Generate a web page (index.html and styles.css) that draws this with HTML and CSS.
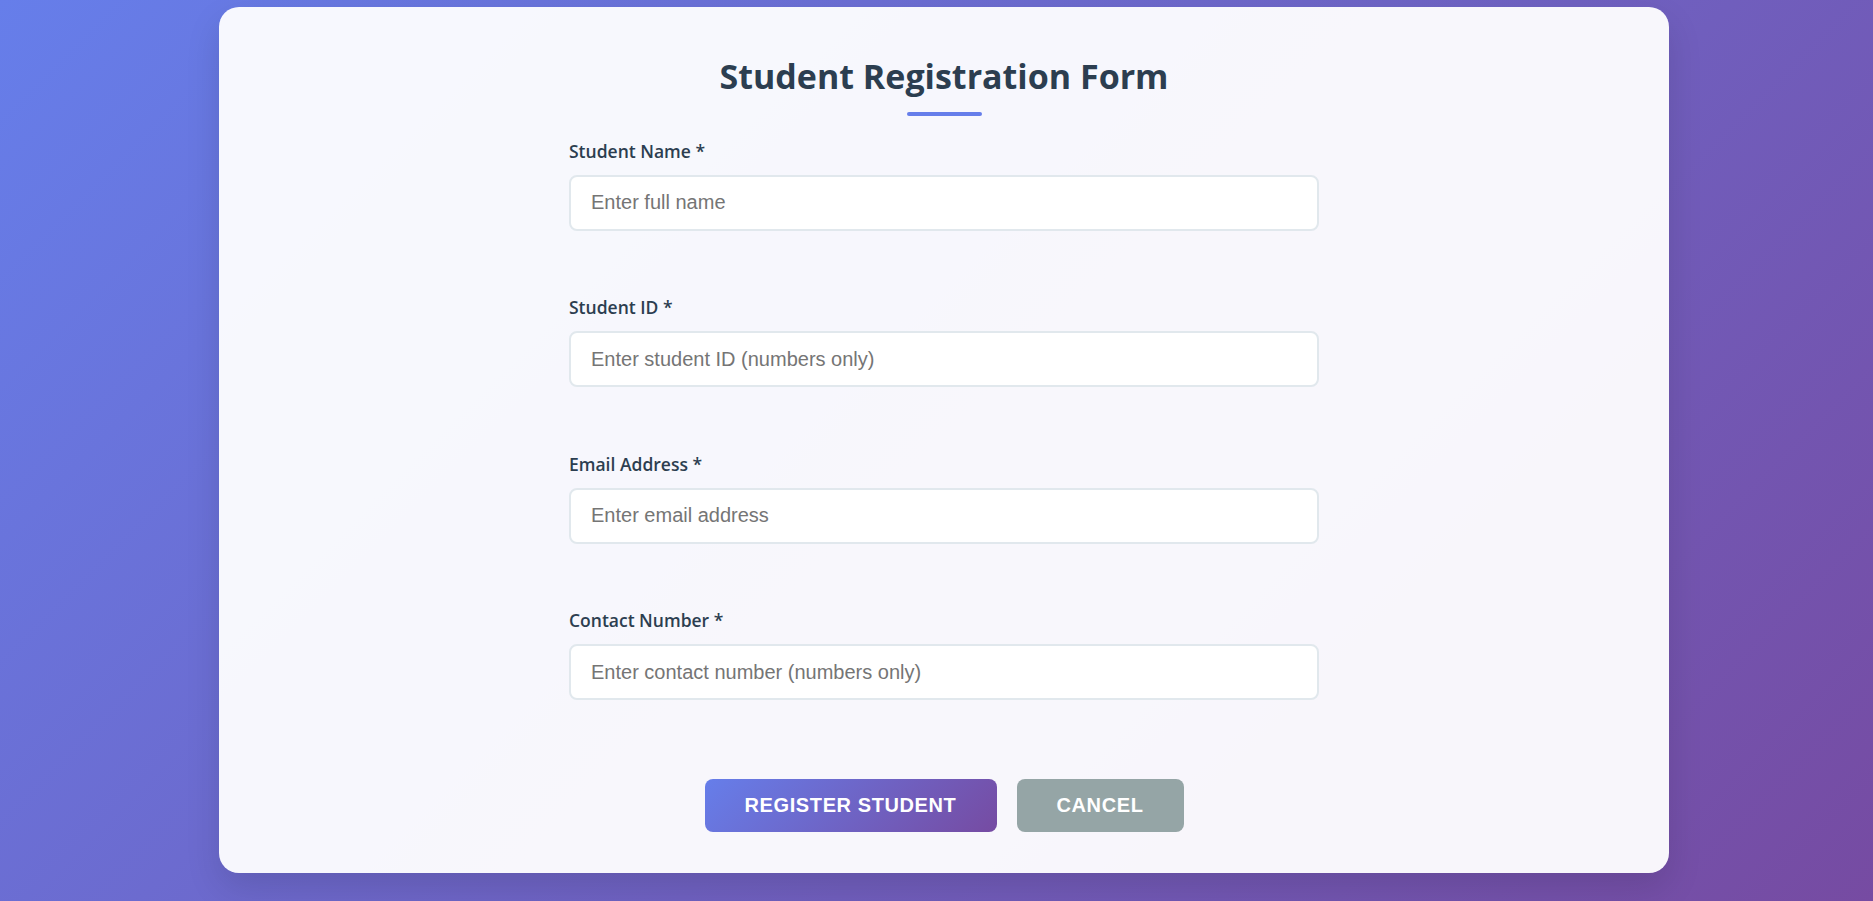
FILE: index.html
```html
<!DOCTYPE html>
<html lang="en">
<head>
<meta charset="utf-8">
<title>Student Registration Form</title>
<link rel="stylesheet" href="styles.css">
</head>
<body>
<div class="page">
  <main class="card">
    <h1 class="title">Student Registration Form</h1>
    <div class="title-bar"></div>
    <form class="form">
      <div class="field">
        <label class="label" for="name">Student Name *</label>
        <input class="input" id="name" type="text" placeholder="Enter full name">
      </div>
      <div class="field">
        <label class="label" for="sid">Student ID *</label>
        <input class="input" id="sid" type="text" placeholder="Enter student ID (numbers only)">
      </div>
      <div class="field">
        <label class="label" for="email">Email Address *</label>
        <input class="input" id="email" type="text" placeholder="Enter email address">
      </div>
      <div class="field">
        <label class="label" for="phone">Contact Number *</label>
        <input class="input" id="phone" type="text" placeholder="Enter contact number (numbers only)">
      </div>
      <div class="actions">
        <button type="button" class="btn btn-primary">Register Student</button>
        <button type="button" class="btn btn-cancel">Cancel</button>
      </div>
    </form>
  </main>
</div>
</body>
</html>
```

FILE: styles.css
```css
* { box-sizing: border-box; }

html, body {
  margin: 0;
  padding: 0;
}

body {
  min-height: 100vh;
  background: linear-gradient(135deg, #667eea 0%, #764ba2 100%);
  font-family: "Open Sans", "Noto Sans", sans-serif;
  color: #2c3e50;
  overflow: hidden;
}

.page {
  display: flex;
  justify-content: center;
  padding: 7px 0 0 15px;
}

.card {
  width: 1450px;
  height: 866px;
  background: rgba(255, 255, 255, 0.95);
  border-radius: 20px;
  box-shadow: 0 15px 35px rgba(0, 0, 0, 0.12);
  padding: 46px 0 40px;
  display: flex;
  flex-direction: column;
  align-items: center;
}

.title {
  margin: 0;
  font-size: 34px;
  line-height: 46px;
  font-weight: 700;
  color: #2c3e50;
  text-align: center;
}

.title-bar {
  width: 75px;
  height: 4px;
  border-radius: 2px;
  background: #667eea;
  margin-top: 13px;
}

.form {
  width: 750px;
  display: flex;
  flex-direction: column;
  margin-top: 22.5px;
}

.field {
  display: flex;
  flex-direction: column;
  margin-bottom: 64.5px;
}

.label {
  font-size: 17.5px;
  line-height: 24px;
  font-weight: 600;
  color: #2c3e50;
  margin-bottom: 12px;
}

.input {
  height: 56px;
  padding: 0 20px;
  border: 2px solid #e1e8ed;
  border-radius: 8px;
  background: #fff;
  font-family: "Liberation Sans", Arial, sans-serif;
  font-size: 20px;
  color: #2c3e50;
  outline: none;
}

.input::placeholder {
  color: #757575;
}

.actions {
  display: flex;
  justify-content: center;
  gap: 20px;
  margin-top: 14.5px;
}

.btn {
  height: 53px;
  padding: 0;
  border: none;
  border-radius: 8px;
  font-family: "Liberation Sans", Arial, sans-serif;
  font-size: 20px;
  font-weight: 700;
  letter-spacing: 0.6px;
  text-transform: uppercase;
  color: #fff;
}

.btn-primary {
  width: 292px;
  background: linear-gradient(135deg, #667eea 0%, #764ba2 100%);
}

.btn-cancel {
  width: 167px;
  background: #95a5a6;
}
```
